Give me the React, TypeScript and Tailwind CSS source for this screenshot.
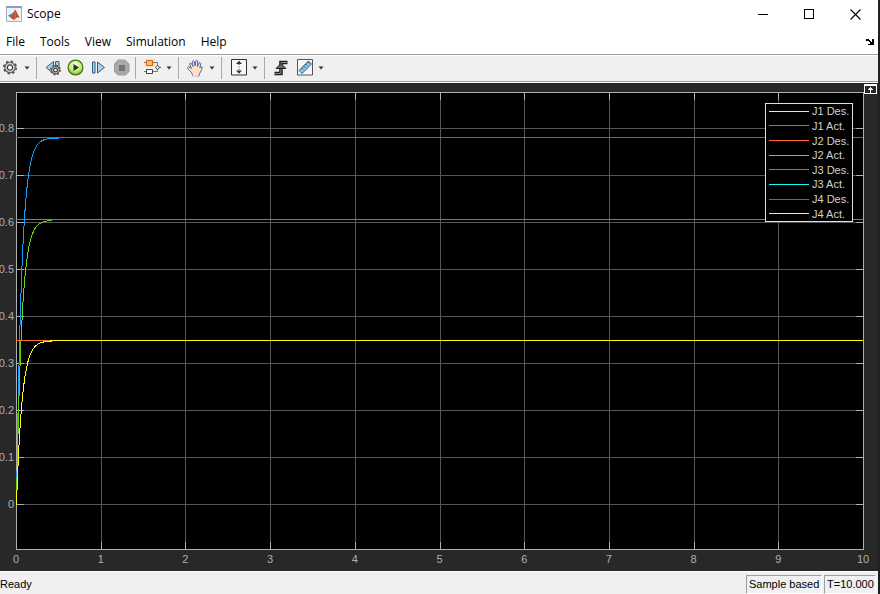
import { useLayoutEffect, useRef, useState } from "react";
import type { ReactNode } from "react";

const MENUS = ["File", "Tools", "View", "Simulation", "Help"];

const LEGEND = [
  { name: "J1 Des.", color: "#ffff11" },
  { name: "J1 Act.", color: "#139fff" },
  { name: "J2 Des.", color: "#ff6929" },
  { name: "J2 Act.", color: "#64d413" },
  { name: "J3 Des.", color: "#b746ff" },
  { name: "J3 Act.", color: "#0fffff" },
  { name: "J4 Des.", color: "#ff13a6" },
  { name: "J4 Act.", color: "#ffff11" },
];

function ToolButton({ label, children }: { label: string; children: ReactNode }) {
  return (
    <button type="button" aria-label={label} className="size-4 shrink-0">
      <svg viewBox="0 0 16 16" className="block size-4 overflow-visible">
        {children}
      </svg>
    </button>
  );
}

function Caret({ label }: { label: string }) {
  return (
    <button type="button" aria-label={label} className="-ml-0.5 h-4 w-2 shrink-0">
      <svg viewBox="0 0 8 16" className="block h-4 w-2">
        <path d="M1.500 6.500h5L4 9.500z" fill="#333" />
      </svg>
    </button>
  );
}

function Separator() {
  return <div className="-ml-0.5 mr-px h-[22px] w-px shrink-0 bg-[#a8a8a8]" />;
}

function Gear({ cx, cy, r }: { cx: number; cy: number; r: number }) {
  const tooth = (r * Math.PI) / 8;
  return (
    <g transform={`translate(${cx} ${cy})`}>
      <circle r={r} fill="none" stroke="#4a4a4a" strokeWidth="1.600" strokeDasharray={`${tooth} ${tooth}`} />
      <circle r={r * 0.84} fill="#d4d4d4" stroke="#555" strokeWidth="1.100" />
      <circle r={r * 0.42} fill="#fafafa" stroke="#3a3a3a" strokeWidth="1.200" />
    </g>
  );
}

function Toolbar() {
  return (
    <div className="flex h-7 shrink-0 items-center gap-[7px] border-y border-[#a0a0a0] bg-[#f0f0f0] pl-0.5 shadow-[inset_0_1px_0_#fff]" role="toolbar">
      <ToolButton label="Configuration properties">
        <Gear cx={8} cy={7.5} r={6.2} />
      </ToolButton>
      <Caret label="Configuration menu" />
      <Separator />
      <ToolButton label="Stepping options">
        <path d="M1 7.500 8.500 1.500v12z" fill="#a8cce6" stroke="#345f80" />
        <path d="M10.500 1.500h3.500v7h-3.500z" fill="#a8cce6" stroke="#345f80" />
        <Gear cx={10.5} cy={10} r={4.6} />
      </ToolButton>
      <ToolButton label="Run">
        <defs>
          <radialGradient id="run" cx=".5" cy=".35" r=".65">
            <stop offset="0" stopColor="#fbfff0" />
            <stop offset=".6" stopColor="#c5ea78" />
            <stop offset="1" stopColor="#7fbd20" />
          </radialGradient>
        </defs>
        <circle cx="7.500" cy="7.500" r="7.400" fill="url(#run)" stroke="#41701c" strokeWidth="1.200" />
        <path d="M5.500 4 11 7.500l-5.500 3.500z" fill="#26331c" />
      </ToolButton>
      <ToolButton label="Step forward">
        <path d="M1.500 2h2.500v11h-2.500z" fill="#a8d2f0" stroke="#315c80" />
        <path d="M6.500 2 13.500 7.500l-7 5.500z" fill="#a8d2f0" stroke="#315c80" strokeLinejoin="round" />
      </ToolButton>
      <ToolButton label="Stop">
        <path d="M4-.5h7l4.500 4.500v7.500l-4 4h-7.500l-4-4v-7.500z" fill="#9c9c9c" />
        <path d="M4.500.500h6l4 4v6.500l-3.500 3.500h-6.500l-3.500-3.500v-6.500z" fill="#a9a9a9" />
        <path d="M5 5h6v6h-6z" fill="#747474" />
      </ToolButton>
      <Separator />
      <ToolButton label="Highlight block">
        <path d="M1-1h10v8H1z" fill="#ffd092" opacity=".55" />
        <path d="M0 2.500h13.500v4M0 11.500h13.500v-3" fill="none" stroke="#777" />
        <path d="M2.500.500h6v5h-6z" fill="#ffb870" stroke="#d46514" />
        <path d="M2.500 9.500h6v4h-6z" fill="#fafafa" stroke="#444" />
        <circle cx="13.500" cy="7.500" r="1.700" fill="#fff" stroke="#555" />
        <path d="M15 7.500h2" stroke="#555" />
      </ToolButton>
      <Caret label="Highlight menu" />
      <Separator />
      <ToolButton label="Pan">
        <path
          d="M5.500 15.500 5 13 1 9 .5 7.500l1-.8 1.500.5 1.500 1.500L2.500 4l.8-1 1 .3L6 6.500 5.300 1.500l1-.9 1 .7.900 4.700.5-5 1-.8 1 .8-.2 5.500 1.500-3.500 1-.5.8 1-1 4.500 1.500-1.500 1 .5-1 3.500-2 3.500-.5 2z"
          fill="#ffe2c8"
          stroke="#3b5fb0"
          strokeWidth=".9"
        />
        <path d="M5.500 11.500h6.500l-1 4.500H6z" fill="#ffe0c6" />
      </ToolButton>
      <Caret label="Pan menu" />
      <Separator />
      <ToolButton label="Scale axes limits">
        <path d="M1.500-.5h15v15.500h-15z" fill="#f8f8f8" stroke="#333" />
        <path d="M6 4h6L9 .8zM6 10.500h6L9 13.700z" fill="#333" />
        <path d="M9 4v7" stroke="#333" strokeDasharray="1 1.500" />
      </ToolButton>
      <Caret label="Scaling menu" />
      <Separator />
      <ToolButton label="Triggers">
        <path d="M1.500 13.500h6.500v-11h6.500" fill="none" stroke="#222" strokeWidth="3.600" />
        <path d="M2 13.500h6v-11h6" fill="none" stroke="#888" strokeWidth="1" />
        <path d="M3 8.500 8 3.500l5 5z" fill="#666" stroke="#222" />
      </ToolButton>
      <ToolButton label="Cursor measurements">
        <path d="M1.500-.5h15v15.500h-15z" fill="#f8f8f8" stroke="#555" />
        <path d="M3 10.500 12.500 1l3 3L6 13.500z" fill="#8fc9e9" stroke="#285f80" />
        <path d="m5.500 8 1.500 1.500M7.500 6 9 7.500M9.500 4l1.500 1.500M11.500 2l1.500 1.500" stroke="#173d57" />
      </ToolButton>
      <Caret label="Measurements menu" />
    </div>
  );
}

const FRAME = { left: 16, right: 15, top: 9, bottom: 22 };
const Y_MIN = -0.0957;
const Y_MAX = 0.8766;

function Chart() {
  const box = useRef<HTMLDivElement>(null);
  const [size, setSize] = useState({ w: 878, h: 488 });

  useLayoutEffect(() => {
    const el = box.current;
    if (!el) return;
    const measure = () => setSize({ w: el.clientWidth, h: el.clientHeight });
    measure();
    const observer = new ResizeObserver(measure);
    observer.observe(el);
    return () => observer.disconnect();
  }, []);

  const x0 = FRAME.left;
  const x1 = size.w - FRAME.right;
  const y0 = FRAME.top;
  const y1 = size.h - FRAME.bottom;
  const px = (t: number) => x0 + (t / 10) * (x1 - x0);
  const py = (v: number) => y1 - ((v - Y_MIN) / (Y_MAX - Y_MIN)) * (y1 - y0);
  const snap = (n: number) => Math.round(n) + 0.5;

  const level = (v: number) => `M${x0} ${snap(py(v))}H${x1}`;
  const rise = (v: number, tau: number, end: number) => {
    const points: string[] = [];
    for (let t = 0; t <= end; t += 0.005) {
      points.push(`${px(t) + 0.5} ${py(v * (1 - Math.exp(-t / tau))) + 0.5}`);
    }
    return `M${points.join("L")}`;
  };

  const xs = Array.from({ length: 11 }, (_, i) => i);
  const ys = Array.from({ length: 9 }, (_, i) => i / 10);

  return (
    <div ref={box} className="relative min-h-0 flex-1 overflow-hidden border-t border-white bg-[#282828]">
      <svg width={size.w} height={size.h} className="absolute inset-0 font-['Liberation_Sans',Arial,sans-serif] text-[11px]">
        <rect x={x0} y={y0} width={x1 - x0} height={y1 - y0} fill="#000" />
        <g shapeRendering="crispEdges" fill="none">
          <g stroke="#575757">
            {xs.slice(1, 10).map((t) => (
              <path key={t} d={`M${snap(px(t))} ${y0}V${y1}`} />
            ))}
            {ys.map((v) => (
              <path key={v} d={`M${x0} ${snap(py(v))}H${x1}`} />
            ))}
          </g>
          <g stroke="#afafaf">
            {xs.slice(1, 10).map((t) => (
              <path key={t} d={`M${snap(px(t))} ${y0}v8M${snap(px(t))} ${y1}v-7`} />
            ))}
            {ys.map((v) => (
              <path key={v} d={`M${x0} ${snap(py(v))}h8M${x1} ${snap(py(v))}h-7`} />
            ))}
            <rect x={x0 + 0.5} y={y0 + 0.5} width={x1 - x0} height={y1 - y0} />
          </g>
          <path d={rise(0.78, 0.062, 0.51)} stroke="#139fff" />
          <path d={level(0.3485)} stroke="#ff6929" />
          <path d={rise(0.605, 0.062, 0.43)} stroke="#64d413" />
          <path d={level(0.606)} stroke="#b746ff" />
          <path d={level(0.781)} stroke="#ff13a6" />
          <path d={rise(0.3485, 0.066, 0.43)} stroke="#ffff11" />
          <path d={`M${px(0.4)} ${snap(py(0.3485))}H${x1}`} stroke="#ffff11" />
        </g>
        <g fill="#afafaf">
          {xs.map((t) => (
            <text key={t} x={px(t)} y={y1 + 14} textAnchor="middle">
              {t}
            </text>
          ))}
          {ys.map((v) => (
            <text key={v} x={14} y={snap(py(v)) + 3.5} textAnchor="end">
              {v}
            </text>
          ))}
        </g>
      </svg>

      <ul className="absolute top-5 right-[25px] flex h-[119px] w-[88px] flex-col border border-[#e0e0e0] bg-black pl-[3px]">
        {LEGEND.map((item) => (
          <li key={item.name} className="flex flex-1 items-center gap-[3px] font-['Liberation_Sans',Arial,sans-serif] text-[11px] leading-3 whitespace-nowrap text-[#d0d0d0]">
            <svg viewBox="0 0 40 1" className="h-px w-10 shrink-0" shapeRendering="crispEdges">
              <rect width="40" height="1" fill={item.color} />
            </svg>
            {item.name}
          </li>
        ))}
      </ul>

      <button type="button" aria-label="Maximize axes" className="absolute top-px right-px">
        <svg viewBox="0 0 13 10" className="block h-2.5 w-[13px]" fill="none" stroke="#fff" shapeRendering="crispEdges">
          <path d="M.500.500h12v9H.500zM.500 1.500h12M6.500 3v6M5 4.500h3M4 5.500h5" />
        </svg>
      </button>
    </div>
  );
}

export default function App() {
  return (
    <div className="flex h-screen flex-col border-r-2 border-[#202020] bg-white font-['Open_Sans','Noto_Sans',sans-serif] text-xs text-black">
      <header className="flex h-7 shrink-0 items-center">
        <svg viewBox="0 0 16 16" className="ml-1.5 size-4 shrink-0">
          <defs>
            <linearGradient id="peak" x1="0" x2="1">
              <stop offset="0" stopColor="#a32116" />
              <stop offset=".45" stopColor="#e96320" />
              <stop offset="1" stopColor="#8b1c16" />
            </linearGradient>
          </defs>
          <path d="M.500.500h15v15H.500z" fill="#f1f1f1" stroke="#a5b0b8" />
          <path d="M0 0h16v2H0z" fill="#7ea6c6" />
          <path d="m2 9.500 4-2 3-3-1 5-3 2.500z" fill="#3d87bd" />
          <path d="M9 3.500c2 1 2.500 6 5 8.500-2-1-3-1-4.500 1L8 14 5 12c2-1 2.500-5.500 4-8.500z" fill="url(#peak)" />
        </svg>
        <h1 className="ml-[5px]">Scope</h1>
        <div className="ml-auto flex">
          <button type="button" aria-label="Minimize" className="flex w-[46px] justify-center">
            <svg viewBox="0 0 11 11" className="size-[11px]" shapeRendering="crispEdges">
              <path d="M0 5.500h10" stroke="#000" />
            </svg>
          </button>
          <button type="button" aria-label="Maximize" className="flex w-[46px] justify-center">
            <svg viewBox="0 0 11 11" className="size-[11px]" fill="none" shapeRendering="crispEdges">
              <path d="M.500.500h9v9H.500z" stroke="#000" />
            </svg>
          </button>
          <button type="button" aria-label="Close" className="flex w-[46px] justify-center">
            <svg viewBox="0 0 11 11" className="size-[11px]" fill="none">
              <path d="m.500.500 10 10M10.500.500l-10 10" stroke="#000" strokeWidth="1.100" />
            </svg>
          </button>
        </div>
      </header>

      <nav className="flex h-[26px] shrink-0 items-center gap-[15px] pt-0.5 pl-1.5">
        {MENUS.map((name) => (
          <button key={name} type="button">
            {name}
          </button>
        ))}
        <button type="button" aria-label="Dock" className="mr-1 ml-auto">
          <svg viewBox="0 0 8 6" className="block h-1.5 w-2" shapeRendering="crispEdges">
            <path d="M0 0h3v1h1v1h1v1h1V0h1.500v6H2V4.500h2V3H3V2H0z" />
          </svg>
        </button>
      </nav>

      <Toolbar />
      <Chart />

      <footer className="flex h-[23px] shrink-0 items-end gap-0.5 border-t border-white bg-[#f0f0f0] pr-0.5 font-['Liberation_Sans',Arial,sans-serif] text-[11px] leading-4">
        <span className="mr-auto mb-0.5">Ready</span>
        <span className="h-[19px] w-[76px] border border-[#a0a0a0] border-r-white border-b-white pl-0.5">Sample based</span>
        <span className="h-[19px] w-[52px] border border-[#a0a0a0] border-r-white border-b-white pl-0.5">T=10.000</span>
      </footer>
    </div>
  );
}
